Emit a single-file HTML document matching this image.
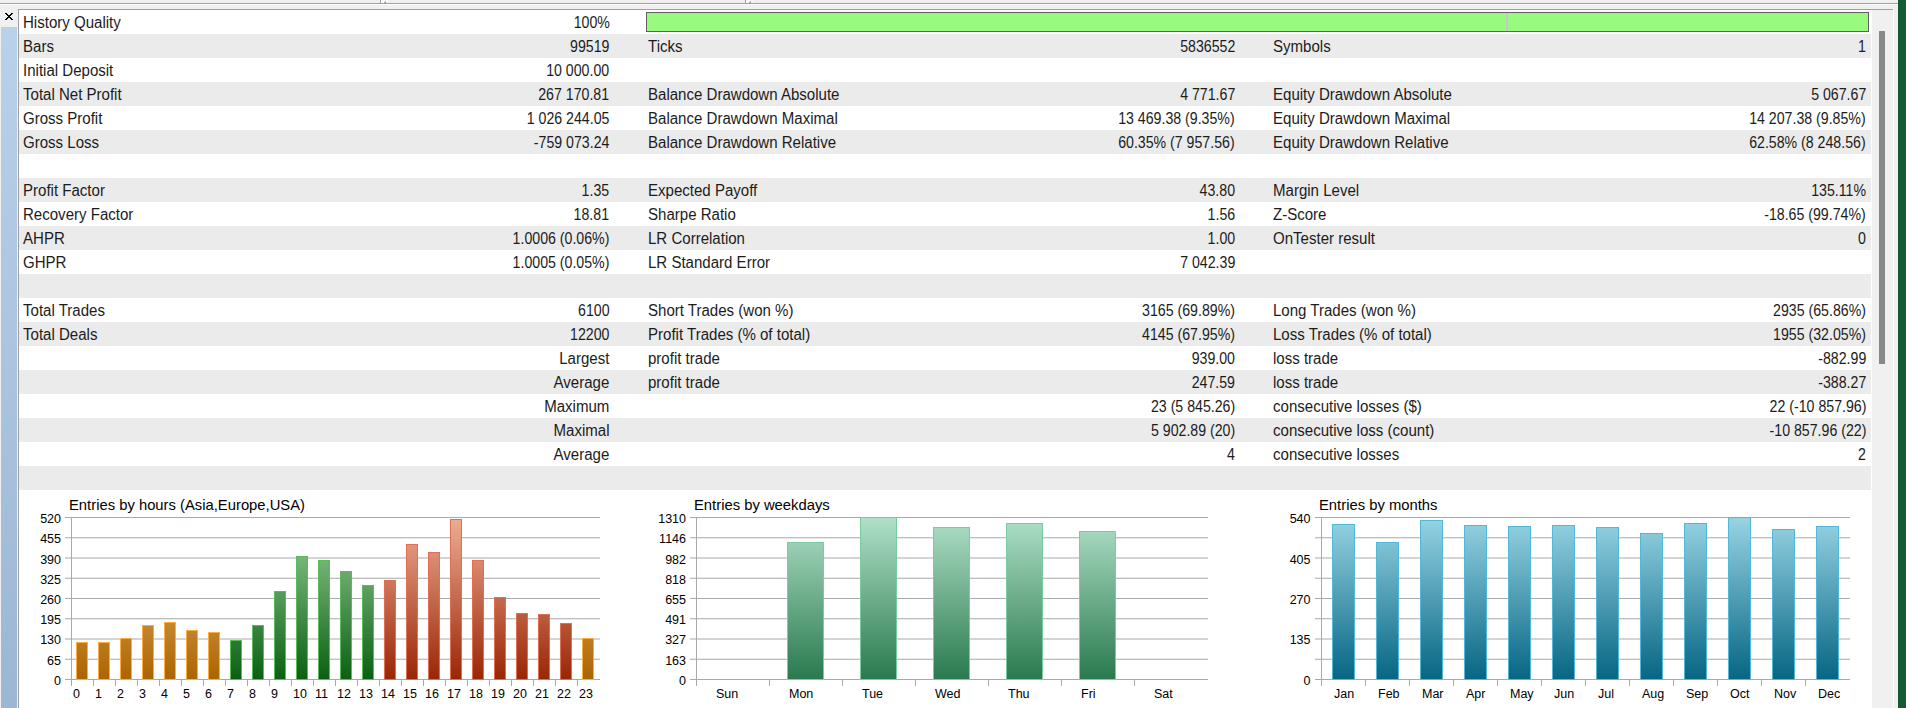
<!DOCTYPE html>
<html><head><meta charset="utf-8">
<style>
html,body{margin:0;padding:0;}
body{width:1906px;height:708px;overflow:hidden;position:relative;background:#f0f0f0;font-family:"Liberation Sans",sans-serif;}
div{position:absolute;}
.row{left:19px;width:1852px;height:24px;}
.t{font-size:16px;line-height:24px;height:24px;margin-top:1px;white-space:nowrap;color:#1c1c1c;transform:scaleX(0.94);transform-origin:0 0;}
.r{transform-origin:100% 0;}
.num{transform:scaleX(0.885);}
.ct{font-size:14.8px;line-height:17px;white-space:nowrap;color:#000;}
.yl,.xl{font-size:12.5px;line-height:16px;white-space:nowrap;color:#000;}
svg{position:absolute;}
</style></head><body>
<div style="left:0;top:3px;width:1898px;height:1px;background:#a0a0a0"></div>
<div style="left:0;top:4px;width:1898px;height:1px;background:#ffffff"></div>
<div style="left:380px;top:0;width:1px;height:3px;background:#a0a0a0"></div>
<div style="left:381px;top:0;width:1px;height:3px;background:#fff"></div>
<div style="left:745px;top:0;width:1px;height:3px;background:#a0a0a0"></div>
<div style="left:746px;top:0;width:1px;height:3px;background:#fff"></div>
<div style="left:382px;top:0;width:6px;height:3px;background:#f8f8f8"></div>
<div style="left:385px;top:1px;width:1px;height:1px;background:#b0b0b0"></div>
<div style="left:384px;top:2px;width:2px;height:1px;background:#a8a8a8"></div>
<div style="left:747px;top:0;width:6px;height:3px;background:#f8f8f8"></div>
<div style="left:750px;top:1px;width:1px;height:1px;background:#b0b0b0"></div>
<div style="left:749px;top:2px;width:2px;height:1px;background:#a8a8a8"></div>
<div style="left:1px;top:27px;width:16px;height:681px;background:linear-gradient(#b9d1ea,#9db6d4)"></div>
<div style="left:18px;top:9px;width:1px;height:699px;background:#a0a0a0"></div>
<div style="left:18px;top:9px;width:1875px;height:1px;background:#a0a0a0"></div>
<div style="left:19px;top:10px;width:1853px;height:698px;background:#fff"></div>
<div style="left:1893px;top:9px;width:1px;height:699px;background:#fff"></div>
<svg width="20" height="26" style="left:0;top:0" shape-rendering="crispEdges"><rect x="5" y="13" width="2" height="1" fill="#000"/><rect x="11" y="13" width="2" height="1" fill="#000"/><rect x="6" y="14" width="2" height="1" fill="#000"/><rect x="10" y="14" width="2" height="1" fill="#000"/><rect x="7" y="15" width="4" height="1" fill="#000"/><rect x="8" y="16" width="2" height="1" fill="#000"/><rect x="7" y="17" width="4" height="1" fill="#000"/><rect x="6" y="18" width="2" height="1" fill="#000"/><rect x="10" y="18" width="2" height="1" fill="#000"/><rect x="5" y="19" width="2" height="1" fill="#000"/><rect x="11" y="19" width="2" height="1" fill="#000"/></svg>
<div class="row" style="top:10px;background:#ffffff"></div>
<div class="t" style="top:10px;left:22.5px">History Quality</div>
<div class="t r num" style="top:10px;right:1296.5px">100%</div>
<div class="row" style="top:34px;background:#ebebeb"></div>
<div class="t" style="top:34px;left:22.5px">Bars</div>
<div class="t r num" style="top:34px;right:1296.5px">99519</div>
<div class="t" style="top:34px;left:647.5px">Ticks</div>
<div class="t r num" style="top:34px;right:671px">5836552</div>
<div class="t" style="top:34px;left:1272.5px">Symbols</div>
<div class="t r num" style="top:34px;right:40px">1</div>
<div class="row" style="top:58px;background:#ffffff"></div>
<div class="t" style="top:58px;left:22.5px">Initial Deposit</div>
<div class="t r num" style="top:58px;right:1296.5px">10 000.00</div>
<div class="row" style="top:82px;background:#ebebeb"></div>
<div class="t" style="top:82px;left:22.5px">Total Net Profit</div>
<div class="t r num" style="top:82px;right:1296.5px">267 170.81</div>
<div class="t" style="top:82px;left:647.5px">Balance Drawdown Absolute</div>
<div class="t r num" style="top:82px;right:671px">4 771.67</div>
<div class="t" style="top:82px;left:1272.5px">Equity Drawdown Absolute</div>
<div class="t r num" style="top:82px;right:40px">5 067.67</div>
<div class="row" style="top:106px;background:#ffffff"></div>
<div class="t" style="top:106px;left:22.5px">Gross Profit</div>
<div class="t r num" style="top:106px;right:1296.5px">1 026 244.05</div>
<div class="t" style="top:106px;left:647.5px">Balance Drawdown Maximal</div>
<div class="t r num" style="top:106px;right:671px">13 469.38 (9.35%)</div>
<div class="t" style="top:106px;left:1272.5px">Equity Drawdown Maximal</div>
<div class="t r num" style="top:106px;right:40px">14 207.38 (9.85%)</div>
<div class="row" style="top:130px;background:#ebebeb"></div>
<div class="t" style="top:130px;left:22.5px">Gross Loss</div>
<div class="t r num" style="top:130px;right:1296.5px">-759 073.24</div>
<div class="t" style="top:130px;left:647.5px">Balance Drawdown Relative</div>
<div class="t r num" style="top:130px;right:671px">60.35% (7 957.56)</div>
<div class="t" style="top:130px;left:1272.5px">Equity Drawdown Relative</div>
<div class="t r num" style="top:130px;right:40px">62.58% (8 248.56)</div>
<div class="row" style="top:154px;background:#ffffff"></div>
<div class="row" style="top:178px;background:#ebebeb"></div>
<div class="t" style="top:178px;left:22.5px">Profit Factor</div>
<div class="t r num" style="top:178px;right:1296.5px">1.35</div>
<div class="t" style="top:178px;left:647.5px">Expected Payoff</div>
<div class="t r num" style="top:178px;right:671px">43.80</div>
<div class="t" style="top:178px;left:1272.5px">Margin Level</div>
<div class="t r num" style="top:178px;right:40px">135.11%</div>
<div class="row" style="top:202px;background:#ffffff"></div>
<div class="t" style="top:202px;left:22.5px">Recovery Factor</div>
<div class="t r num" style="top:202px;right:1296.5px">18.81</div>
<div class="t" style="top:202px;left:647.5px">Sharpe Ratio</div>
<div class="t r num" style="top:202px;right:671px">1.56</div>
<div class="t" style="top:202px;left:1272.5px">Z-Score</div>
<div class="t r num" style="top:202px;right:40px">-18.65 (99.74%)</div>
<div class="row" style="top:226px;background:#ebebeb"></div>
<div class="t" style="top:226px;left:22.5px">AHPR</div>
<div class="t r num" style="top:226px;right:1296.5px">1.0006 (0.06%)</div>
<div class="t" style="top:226px;left:647.5px">LR Correlation</div>
<div class="t r num" style="top:226px;right:671px">1.00</div>
<div class="t" style="top:226px;left:1272.5px">OnTester result</div>
<div class="t r num" style="top:226px;right:40px">0</div>
<div class="row" style="top:250px;background:#ffffff"></div>
<div class="t" style="top:250px;left:22.5px">GHPR</div>
<div class="t r num" style="top:250px;right:1296.5px">1.0005 (0.05%)</div>
<div class="t" style="top:250px;left:647.5px">LR Standard Error</div>
<div class="t r num" style="top:250px;right:671px">7 042.39</div>
<div class="row" style="top:274px;background:#ebebeb"></div>
<div class="row" style="top:298px;background:#ffffff"></div>
<div class="t" style="top:298px;left:22.5px">Total Trades</div>
<div class="t r num" style="top:298px;right:1296.5px">6100</div>
<div class="t" style="top:298px;left:647.5px">Short Trades (won %)</div>
<div class="t r num" style="top:298px;right:671px">3165 (69.89%)</div>
<div class="t" style="top:298px;left:1272.5px">Long Trades (won %)</div>
<div class="t r num" style="top:298px;right:40px">2935 (65.86%)</div>
<div class="row" style="top:322px;background:#ebebeb"></div>
<div class="t" style="top:322px;left:22.5px">Total Deals</div>
<div class="t r num" style="top:322px;right:1296.5px">12200</div>
<div class="t" style="top:322px;left:647.5px">Profit Trades (% of total)</div>
<div class="t r num" style="top:322px;right:671px">4145 (67.95%)</div>
<div class="t" style="top:322px;left:1272.5px">Loss Trades (% of total)</div>
<div class="t r num" style="top:322px;right:40px">1955 (32.05%)</div>
<div class="row" style="top:346px;background:#ffffff"></div>
<div class="t r" style="top:346px;right:1296.5px">Largest</div>
<div class="t" style="top:346px;left:647.5px">profit trade</div>
<div class="t r num" style="top:346px;right:671px">939.00</div>
<div class="t" style="top:346px;left:1272.5px">loss trade</div>
<div class="t r num" style="top:346px;right:40px">-882.99</div>
<div class="row" style="top:370px;background:#ebebeb"></div>
<div class="t r" style="top:370px;right:1296.5px">Average</div>
<div class="t" style="top:370px;left:647.5px">profit trade</div>
<div class="t r num" style="top:370px;right:671px">247.59</div>
<div class="t" style="top:370px;left:1272.5px">loss trade</div>
<div class="t r num" style="top:370px;right:40px">-388.27</div>
<div class="row" style="top:394px;background:#ffffff"></div>
<div class="t r" style="top:394px;right:1296.5px">Maximum</div>
<div class="t r num" style="top:394px;right:671px">23 (5 845.26)</div>
<div class="t" style="top:394px;left:1272.5px">consecutive losses ($)</div>
<div class="t r num" style="top:394px;right:40px">22 (-10 857.96)</div>
<div class="row" style="top:418px;background:#ebebeb"></div>
<div class="t r" style="top:418px;right:1296.5px">Maximal</div>
<div class="t r num" style="top:418px;right:671px">5 902.89 (20)</div>
<div class="t" style="top:418px;left:1272.5px">consecutive loss (count)</div>
<div class="t r num" style="top:418px;right:40px">-10 857.96 (22)</div>
<div class="row" style="top:442px;background:#ffffff"></div>
<div class="t r" style="top:442px;right:1296.5px">Average</div>
<div class="t r num" style="top:442px;right:671px">4</div>
<div class="t" style="top:442px;left:1272.5px">consecutive losses</div>
<div class="t r num" style="top:442px;right:40px">2</div>
<div class="row" style="top:466px;background:#ebebeb"></div>
<div style="left:646px;top:12px;width:1221px;height:18px;border:1px solid #606060;background:#98fb80"></div>
<div style="left:1506px;top:13px;width:2px;height:18px;background:#c8c4cc"></div>
<div style="left:1879px;top:31px;width:6px;height:333px;background:#888"></div>
<div style="left:1898px;top:0;width:8px;height:708px;background:#165a31"></div>
<div class="ct" style="left:69px;top:497px">Entries by hours (Asia,Europe,USA)</div>
<svg class="ch" width="1906" height="708" style="left:0;top:0" shape-rendering="crispEdges"><defs><linearGradient id="g_69_o" gradientUnits="userSpaceOnUse" x1="0" y1="517" x2="0" y2="679"><stop offset="0" stop-color="#f0c890"/><stop offset="1" stop-color="#ac6400"/></linearGradient><linearGradient id="g_69_g" gradientUnits="userSpaceOnUse" x1="0" y1="517" x2="0" y2="679"><stop offset="0" stop-color="#9cd09c"/><stop offset="1" stop-color="#0a6012"/></linearGradient><linearGradient id="g_69_r" gradientUnits="userSpaceOnUse" x1="0" y1="517" x2="0" y2="679"><stop offset="0" stop-color="#eeae94"/><stop offset="1" stop-color="#9a2606"/></linearGradient></defs><rect x="65" y="679.0" width="535" height="1" fill="#a9a9a9" shape-rendering="auto"/><rect x="65" y="658.75" width="535" height="1" fill="#a9a9a9" shape-rendering="auto"/><rect x="65" y="638.5" width="535" height="1" fill="#a9a9a9" shape-rendering="auto"/><rect x="65" y="618.25" width="535" height="1" fill="#a9a9a9" shape-rendering="auto"/><rect x="65" y="598.0" width="535" height="1" fill="#a9a9a9" shape-rendering="auto"/><rect x="65" y="577.75" width="535" height="1" fill="#a9a9a9" shape-rendering="auto"/><rect x="65" y="557.5" width="535" height="1" fill="#a9a9a9" shape-rendering="auto"/><rect x="65" y="537.25" width="535" height="1" fill="#a9a9a9" shape-rendering="auto"/><rect x="65" y="517.0" width="535" height="1" fill="#a9a9a9" shape-rendering="auto"/><rect x="71" y="517" width="1" height="169" fill="#a9a9a9"/><rect x="65" y="679" width="535" height="1" fill="#a9a9a9"/><rect x="71" y="680" width="1" height="6" fill="#a9a9a9"/><rect x="93" y="680" width="1" height="6" fill="#a9a9a9"/><rect x="115" y="680" width="1" height="6" fill="#a9a9a9"/><rect x="137" y="680" width="1" height="6" fill="#a9a9a9"/><rect x="159" y="680" width="1" height="6" fill="#a9a9a9"/><rect x="181" y="680" width="1" height="6" fill="#a9a9a9"/><rect x="203" y="680" width="1" height="6" fill="#a9a9a9"/><rect x="225" y="680" width="1" height="6" fill="#a9a9a9"/><rect x="247" y="680" width="1" height="6" fill="#a9a9a9"/><rect x="269" y="680" width="1" height="6" fill="#a9a9a9"/><rect x="291" y="680" width="1" height="6" fill="#a9a9a9"/><rect x="313" y="680" width="1" height="6" fill="#a9a9a9"/><rect x="335" y="680" width="1" height="6" fill="#a9a9a9"/><rect x="357" y="680" width="1" height="6" fill="#a9a9a9"/><rect x="379" y="680" width="1" height="6" fill="#a9a9a9"/><rect x="401" y="680" width="1" height="6" fill="#a9a9a9"/><rect x="423" y="680" width="1" height="6" fill="#a9a9a9"/><rect x="445" y="680" width="1" height="6" fill="#a9a9a9"/><rect x="467" y="680" width="1" height="6" fill="#a9a9a9"/><rect x="489" y="680" width="1" height="6" fill="#a9a9a9"/><rect x="511" y="680" width="1" height="6" fill="#a9a9a9"/><rect x="533" y="680" width="1" height="6" fill="#a9a9a9"/><rect x="555" y="680" width="1" height="6" fill="#a9a9a9"/><rect x="577" y="680" width="1" height="6" fill="#a9a9a9"/><rect x="76" y="642" width="12" height="38" fill="#ffad3c"/><rect x="77" y="643" width="10" height="36" fill="url(#g_69_o)"/><rect x="98" y="642" width="12" height="38" fill="#ffad3c"/><rect x="99" y="643" width="10" height="36" fill="url(#g_69_o)"/><rect x="120" y="638" width="12" height="42" fill="#ffad3c"/><rect x="121" y="639" width="10" height="40" fill="url(#g_69_o)"/><rect x="142" y="625" width="12" height="55" fill="#ffad3c"/><rect x="143" y="626" width="10" height="53" fill="url(#g_69_o)"/><rect x="164" y="622" width="12" height="58" fill="#ffad3c"/><rect x="165" y="623" width="10" height="56" fill="url(#g_69_o)"/><rect x="186" y="630" width="12" height="50" fill="#ffad3c"/><rect x="187" y="631" width="10" height="48" fill="url(#g_69_o)"/><rect x="208" y="632" width="12" height="48" fill="#ffad3c"/><rect x="209" y="633" width="10" height="46" fill="url(#g_69_o)"/><rect x="230" y="640" width="12" height="40" fill="#58bc58"/><rect x="231" y="641" width="10" height="38" fill="url(#g_69_g)"/><rect x="252" y="625" width="12" height="55" fill="#58bc58"/><rect x="253" y="626" width="10" height="53" fill="url(#g_69_g)"/><rect x="274" y="591" width="12" height="89" fill="#58bc58"/><rect x="275" y="592" width="10" height="87" fill="url(#g_69_g)"/><rect x="296" y="556" width="12" height="124" fill="#58bc58"/><rect x="297" y="557" width="10" height="122" fill="url(#g_69_g)"/><rect x="318" y="560" width="12" height="120" fill="#58bc58"/><rect x="319" y="561" width="10" height="118" fill="url(#g_69_g)"/><rect x="340" y="571" width="12" height="109" fill="#58bc58"/><rect x="341" y="572" width="10" height="107" fill="url(#g_69_g)"/><rect x="362" y="585" width="12" height="95" fill="#58bc58"/><rect x="363" y="586" width="10" height="93" fill="url(#g_69_g)"/><rect x="384" y="580" width="12" height="100" fill="#e46e52"/><rect x="385" y="581" width="10" height="98" fill="url(#g_69_r)"/><rect x="406" y="544" width="12" height="136" fill="#e46e52"/><rect x="407" y="545" width="10" height="134" fill="url(#g_69_r)"/><rect x="428" y="552" width="12" height="128" fill="#e46e52"/><rect x="429" y="553" width="10" height="126" fill="url(#g_69_r)"/><rect x="450" y="519" width="12" height="161" fill="#e46e52"/><rect x="451" y="520" width="10" height="159" fill="url(#g_69_r)"/><rect x="472" y="560" width="12" height="120" fill="#e46e52"/><rect x="473" y="561" width="10" height="118" fill="url(#g_69_r)"/><rect x="494" y="597" width="12" height="83" fill="#e46e52"/><rect x="495" y="598" width="10" height="81" fill="url(#g_69_r)"/><rect x="516" y="613" width="12" height="67" fill="#e46e52"/><rect x="517" y="614" width="10" height="65" fill="url(#g_69_r)"/><rect x="538" y="614" width="12" height="66" fill="#e46e52"/><rect x="539" y="615" width="10" height="64" fill="url(#g_69_r)"/><rect x="560" y="623" width="12" height="57" fill="#e46e52"/><rect x="561" y="624" width="10" height="55" fill="url(#g_69_r)"/><rect x="582" y="638" width="12" height="42" fill="#ffad3c"/><rect x="583" y="639" width="10" height="40" fill="url(#g_69_o)"/></svg>
<div class="yl" style="top:673px;right:1845px">0</div>
<div class="yl" style="top:653px;right:1845px">65</div>
<div class="yl" style="top:632px;right:1845px">130</div>
<div class="yl" style="top:612px;right:1845px">195</div>
<div class="yl" style="top:592px;right:1845px">260</div>
<div class="yl" style="top:572px;right:1845px">325</div>
<div class="yl" style="top:552px;right:1845px">390</div>
<div class="yl" style="top:531px;right:1845px">455</div>
<div class="yl" style="top:511px;right:1845px">520</div>
<div class="xl" style="top:686px;left:73px">0</div>
<div class="xl" style="top:686px;left:95px">1</div>
<div class="xl" style="top:686px;left:117px">2</div>
<div class="xl" style="top:686px;left:139px">3</div>
<div class="xl" style="top:686px;left:161px">4</div>
<div class="xl" style="top:686px;left:183px">5</div>
<div class="xl" style="top:686px;left:205px">6</div>
<div class="xl" style="top:686px;left:227px">7</div>
<div class="xl" style="top:686px;left:249px">8</div>
<div class="xl" style="top:686px;left:271px">9</div>
<div class="xl" style="top:686px;left:293px">10</div>
<div class="xl" style="top:686px;left:315px">11</div>
<div class="xl" style="top:686px;left:337px">12</div>
<div class="xl" style="top:686px;left:359px">13</div>
<div class="xl" style="top:686px;left:381px">14</div>
<div class="xl" style="top:686px;left:403px">15</div>
<div class="xl" style="top:686px;left:425px">16</div>
<div class="xl" style="top:686px;left:447px">17</div>
<div class="xl" style="top:686px;left:469px">18</div>
<div class="xl" style="top:686px;left:491px">19</div>
<div class="xl" style="top:686px;left:513px">20</div>
<div class="xl" style="top:686px;left:535px">21</div>
<div class="xl" style="top:686px;left:557px">22</div>
<div class="xl" style="top:686px;left:579px">23</div>
<div class="ct" style="left:694px;top:497px">Entries by weekdays</div>
<svg class="ch" width="1906" height="708" style="left:0;top:0" shape-rendering="crispEdges"><defs><linearGradient id="g_694_w" gradientUnits="userSpaceOnUse" x1="0" y1="517" x2="0" y2="679"><stop offset="0" stop-color="#b0e0c8"/><stop offset="1" stop-color="#2a7a4e"/></linearGradient></defs><rect x="690" y="679.0" width="518" height="1" fill="#a9a9a9" shape-rendering="auto"/><rect x="690" y="658.75" width="518" height="1" fill="#a9a9a9" shape-rendering="auto"/><rect x="690" y="638.5" width="518" height="1" fill="#a9a9a9" shape-rendering="auto"/><rect x="690" y="618.25" width="518" height="1" fill="#a9a9a9" shape-rendering="auto"/><rect x="690" y="598.0" width="518" height="1" fill="#a9a9a9" shape-rendering="auto"/><rect x="690" y="577.75" width="518" height="1" fill="#a9a9a9" shape-rendering="auto"/><rect x="690" y="557.5" width="518" height="1" fill="#a9a9a9" shape-rendering="auto"/><rect x="690" y="537.25" width="518" height="1" fill="#a9a9a9" shape-rendering="auto"/><rect x="690" y="517.0" width="518" height="1" fill="#a9a9a9" shape-rendering="auto"/><rect x="696" y="517" width="1" height="169" fill="#a9a9a9"/><rect x="690" y="679" width="518" height="1" fill="#a9a9a9"/><rect x="696" y="680" width="1" height="6" fill="#a9a9a9"/><rect x="769" y="680" width="1" height="6" fill="#a9a9a9"/><rect x="842" y="680" width="1" height="6" fill="#a9a9a9"/><rect x="915" y="680" width="1" height="6" fill="#a9a9a9"/><rect x="988" y="680" width="1" height="6" fill="#a9a9a9"/><rect x="1061" y="680" width="1" height="6" fill="#a9a9a9"/><rect x="1134" y="680" width="1" height="6" fill="#a9a9a9"/><rect x="787" y="542" width="37" height="138" fill="#78cca0"/><rect x="788" y="543" width="35" height="136" fill="url(#g_694_w)"/><rect x="860" y="517" width="37" height="163" fill="#78cca0"/><rect x="861" y="518" width="35" height="161" fill="url(#g_694_w)"/><rect x="933" y="527" width="37" height="153" fill="#78cca0"/><rect x="934" y="528" width="35" height="151" fill="url(#g_694_w)"/><rect x="1006" y="523" width="37" height="157" fill="#78cca0"/><rect x="1007" y="524" width="35" height="155" fill="url(#g_694_w)"/><rect x="1079" y="531" width="37" height="149" fill="#78cca0"/><rect x="1080" y="532" width="35" height="147" fill="url(#g_694_w)"/></svg>
<div class="yl" style="top:673px;right:1220px">0</div>
<div class="yl" style="top:653px;right:1220px">163</div>
<div class="yl" style="top:632px;right:1220px">327</div>
<div class="yl" style="top:612px;right:1220px">491</div>
<div class="yl" style="top:592px;right:1220px">655</div>
<div class="yl" style="top:572px;right:1220px">818</div>
<div class="yl" style="top:552px;right:1220px">982</div>
<div class="yl" style="top:531px;right:1220px">1146</div>
<div class="yl" style="top:511px;right:1220px">1310</div>
<div class="xl" style="top:686px;left:716px">Sun</div>
<div class="xl" style="top:686px;left:789px">Mon</div>
<div class="xl" style="top:686px;left:862px">Tue</div>
<div class="xl" style="top:686px;left:935px">Wed</div>
<div class="xl" style="top:686px;left:1008px">Thu</div>
<div class="xl" style="top:686px;left:1081px">Fri</div>
<div class="xl" style="top:686px;left:1154px">Sat</div>
<div class="ct" style="left:1319px;top:497px">Entries by months</div>
<svg class="ch" width="1906" height="708" style="left:0;top:0" shape-rendering="crispEdges"><defs><linearGradient id="g_1319_m" gradientUnits="userSpaceOnUse" x1="0" y1="517" x2="0" y2="679"><stop offset="0" stop-color="#98d4e4"/><stop offset="1" stop-color="#066684"/></linearGradient></defs><rect x="1315" y="679.0" width="535" height="1" fill="#a9a9a9" shape-rendering="auto"/><rect x="1315" y="658.75" width="535" height="1" fill="#a9a9a9" shape-rendering="auto"/><rect x="1315" y="638.5" width="535" height="1" fill="#a9a9a9" shape-rendering="auto"/><rect x="1315" y="618.25" width="535" height="1" fill="#a9a9a9" shape-rendering="auto"/><rect x="1315" y="598.0" width="535" height="1" fill="#a9a9a9" shape-rendering="auto"/><rect x="1315" y="577.75" width="535" height="1" fill="#a9a9a9" shape-rendering="auto"/><rect x="1315" y="557.5" width="535" height="1" fill="#a9a9a9" shape-rendering="auto"/><rect x="1315" y="537.25" width="535" height="1" fill="#a9a9a9" shape-rendering="auto"/><rect x="1315" y="517.0" width="535" height="1" fill="#a9a9a9" shape-rendering="auto"/><rect x="1321" y="517" width="1" height="169" fill="#a9a9a9"/><rect x="1315" y="679" width="535" height="1" fill="#a9a9a9"/><rect x="1321" y="680" width="1" height="6" fill="#a9a9a9"/><rect x="1365" y="680" width="1" height="6" fill="#a9a9a9"/><rect x="1409" y="680" width="1" height="6" fill="#a9a9a9"/><rect x="1453" y="680" width="1" height="6" fill="#a9a9a9"/><rect x="1497" y="680" width="1" height="6" fill="#a9a9a9"/><rect x="1541" y="680" width="1" height="6" fill="#a9a9a9"/><rect x="1585" y="680" width="1" height="6" fill="#a9a9a9"/><rect x="1629" y="680" width="1" height="6" fill="#a9a9a9"/><rect x="1673" y="680" width="1" height="6" fill="#a9a9a9"/><rect x="1717" y="680" width="1" height="6" fill="#a9a9a9"/><rect x="1761" y="680" width="1" height="6" fill="#a9a9a9"/><rect x="1805" y="680" width="1" height="6" fill="#a9a9a9"/><rect x="1332" y="524" width="23" height="156" fill="#50b8d8"/><rect x="1333" y="525" width="21" height="154" fill="url(#g_1319_m)"/><rect x="1376" y="542" width="23" height="138" fill="#50b8d8"/><rect x="1377" y="543" width="21" height="136" fill="url(#g_1319_m)"/><rect x="1420" y="520" width="23" height="160" fill="#50b8d8"/><rect x="1421" y="521" width="21" height="158" fill="url(#g_1319_m)"/><rect x="1464" y="525" width="23" height="155" fill="#50b8d8"/><rect x="1465" y="526" width="21" height="153" fill="url(#g_1319_m)"/><rect x="1508" y="526" width="23" height="154" fill="#50b8d8"/><rect x="1509" y="527" width="21" height="152" fill="url(#g_1319_m)"/><rect x="1552" y="525" width="23" height="155" fill="#50b8d8"/><rect x="1553" y="526" width="21" height="153" fill="url(#g_1319_m)"/><rect x="1596" y="527" width="23" height="153" fill="#50b8d8"/><rect x="1597" y="528" width="21" height="151" fill="url(#g_1319_m)"/><rect x="1640" y="533" width="23" height="147" fill="#50b8d8"/><rect x="1641" y="534" width="21" height="145" fill="url(#g_1319_m)"/><rect x="1684" y="523" width="23" height="157" fill="#50b8d8"/><rect x="1685" y="524" width="21" height="155" fill="url(#g_1319_m)"/><rect x="1728" y="517" width="23" height="163" fill="#50b8d8"/><rect x="1729" y="518" width="21" height="161" fill="url(#g_1319_m)"/><rect x="1772" y="529" width="23" height="151" fill="#50b8d8"/><rect x="1773" y="530" width="21" height="149" fill="url(#g_1319_m)"/><rect x="1816" y="526" width="23" height="154" fill="#50b8d8"/><rect x="1817" y="527" width="21" height="152" fill="url(#g_1319_m)"/></svg>
<div class="yl" style="top:673px;right:595.5px">0</div>
<div class="yl" style="top:632px;right:595.5px">135</div>
<div class="yl" style="top:592px;right:595.5px">270</div>
<div class="yl" style="top:552px;right:595.5px">405</div>
<div class="yl" style="top:511px;right:595.5px">540</div>
<div class="xl" style="top:686px;left:1334px">Jan</div>
<div class="xl" style="top:686px;left:1378px">Feb</div>
<div class="xl" style="top:686px;left:1422px">Mar</div>
<div class="xl" style="top:686px;left:1466px">Apr</div>
<div class="xl" style="top:686px;left:1510px">May</div>
<div class="xl" style="top:686px;left:1554px">Jun</div>
<div class="xl" style="top:686px;left:1598px">Jul</div>
<div class="xl" style="top:686px;left:1642px">Aug</div>
<div class="xl" style="top:686px;left:1686px">Sep</div>
<div class="xl" style="top:686px;left:1730px">Oct</div>
<div class="xl" style="top:686px;left:1774px">Nov</div>
<div class="xl" style="top:686px;left:1818px">Dec</div>
</body></html>
